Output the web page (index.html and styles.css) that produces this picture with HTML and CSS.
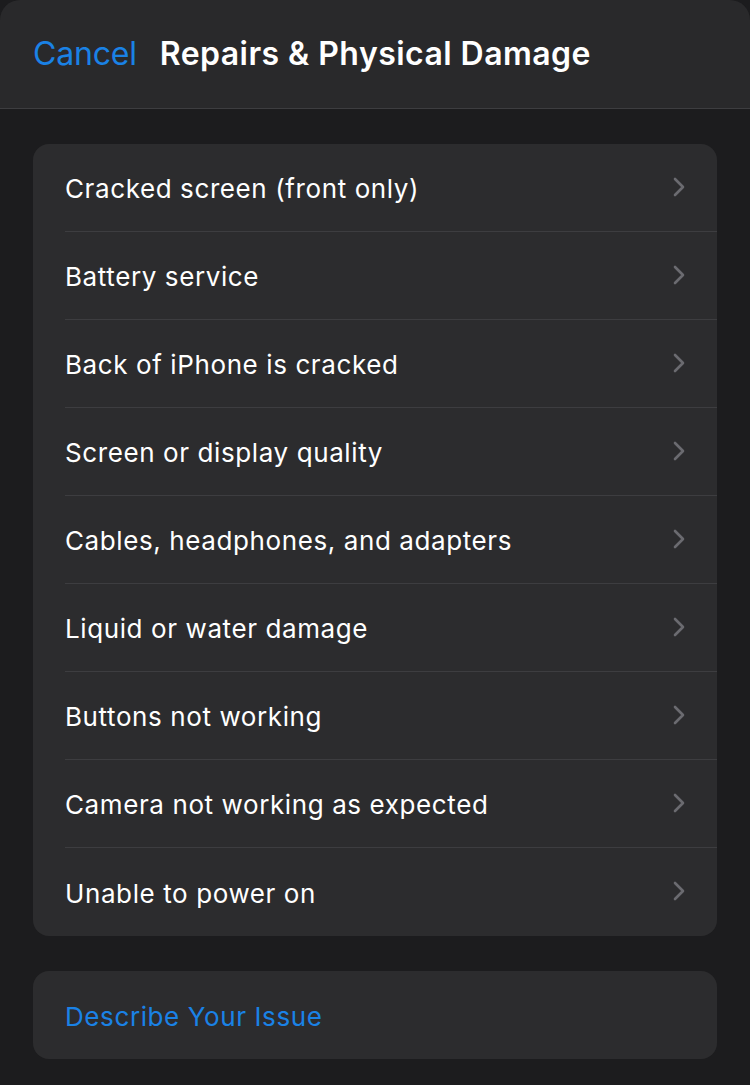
FILE: index.html
```html
<!DOCTYPE html>
<html lang="en">

<head>
    <meta charset="UTF-8">
    <meta name="viewport" content="width=device-width, initial-scale=1.0">
    <title>Repairs &amp; Physical Damage</title>
    <link rel="stylesheet" href="styles.css">
</head>

<body>
    <div class="sheet">
        <!-- Navigation bar -->
        <header class="nav-bar">
            <a class="nav-cancel" href="#">Cancel</a>
            <h1 class="nav-title">Repairs &amp; Physical Damage</h1>
        </header>

        <main class="content">
            <!-- Issue list -->
            <ul class="group">
                <li class="row"><span class="row-label">Cracked screen (front only)</span><svg class="chevron" viewBox="0 0 12 20"><path d="M2 2l8 8-8 8" /></svg></li>
                <li class="row"><span class="row-label">Battery service</span><svg class="chevron" viewBox="0 0 12 20"><path d="M2 2l8 8-8 8" /></svg></li>
                <li class="row"><span class="row-label">Back of iPhone is cracked</span><svg class="chevron" viewBox="0 0 12 20"><path d="M2 2l8 8-8 8" /></svg></li>
                <li class="row"><span class="row-label">Screen or display quality</span><svg class="chevron" viewBox="0 0 12 20"><path d="M2 2l8 8-8 8" /></svg></li>
                <li class="row"><span class="row-label">Cables, headphones, and adapters</span><svg class="chevron" viewBox="0 0 12 20"><path d="M2 2l8 8-8 8" /></svg></li>
                <li class="row"><span class="row-label">Liquid or water damage</span><svg class="chevron" viewBox="0 0 12 20"><path d="M2 2l8 8-8 8" /></svg></li>
                <li class="row"><span class="row-label">Buttons not working</span><svg class="chevron" viewBox="0 0 12 20"><path d="M2 2l8 8-8 8" /></svg></li>
                <li class="row"><span class="row-label">Camera not working as expected</span><svg class="chevron" viewBox="0 0 12 20"><path d="M2 2l8 8-8 8" /></svg></li>
                <li class="row"><span class="row-label">Unable to power on</span><svg class="chevron" viewBox="0 0 12 20"><path d="M2 2l8 8-8 8" /></svg></li>
            </ul>

            <!-- Free text option -->
            <ul class="group">
                <li class="row"><a class="row-link" href="#">Describe Your Issue</a></li>
            </ul>
        </main>
    </div>
</body>

</html>
```

FILE: styles.css
```css
/* General Styles */
html,
body {
    margin: 0;
    padding: 0;
    background-color: #1c1c1e;
}

body {
    font-family: Inter, "Noto Sans", sans-serif;
    color: #fff;
    -webkit-font-smoothing: antialiased;
}

a {
    text-decoration: none;
}

/* Sheet */
.sheet {
    min-height: 1085px;
    background-color: #1c1c1e;
    border-radius: 20px 20px 0 0;
    overflow: hidden;
}

/* Navigation bar */
.nav-bar {
    display: flex;
    align-items: center;
    gap: 23px;
    height: 108px;
    padding: 0 33px;
    background-color: #29292b;
    border-bottom: 1px solid #3d3d40;
    box-sizing: content-box;
}

.nav-cancel {
    color: #1a82e6;
    font-size: 32px;
    font-weight: 400;
    letter-spacing: -0.2px;
    margin-top: -2px;
}

.nav-title {
    margin: -2px 0 0;
    font-size: 32px;
    font-weight: 600;
    letter-spacing: 0.45px;
    color: #fff;
}

/* Content */
.content {
    display: flex;
    flex-direction: column;
    gap: 35px;
    padding: 35px 33px 0;
}

.group {
    list-style: none;
    margin: 0;
    padding: 0 0 0 32px;
    background-color: #2c2c2e;
    border-radius: 16px;
}

.row {
    display: flex;
    align-items: center;
    justify-content: space-between;
    height: 87px;
    padding-right: 32px;
    border-bottom: 1px solid #3d3d40;
}

.row:last-child {
    border-bottom: none;
    height: 88px;
}

.row-label {
    font-size: 26px;
    letter-spacing: 0.6px;
    color: #fff;
    margin-top: 2px;
}

.row-link {
    font-size: 26px;
    letter-spacing: 0.6px;
    color: #1a82e6;
    margin-top: 2px;
}

/* Chevron */
.chevron {
    width: 12px;
    height: 20px;
    margin-top: -2px;
}

.chevron path {
    fill: none;
    stroke: #6b6b70;
    stroke-width: 2.6;
    stroke-linecap: round;
    stroke-linejoin: round;
}
```
